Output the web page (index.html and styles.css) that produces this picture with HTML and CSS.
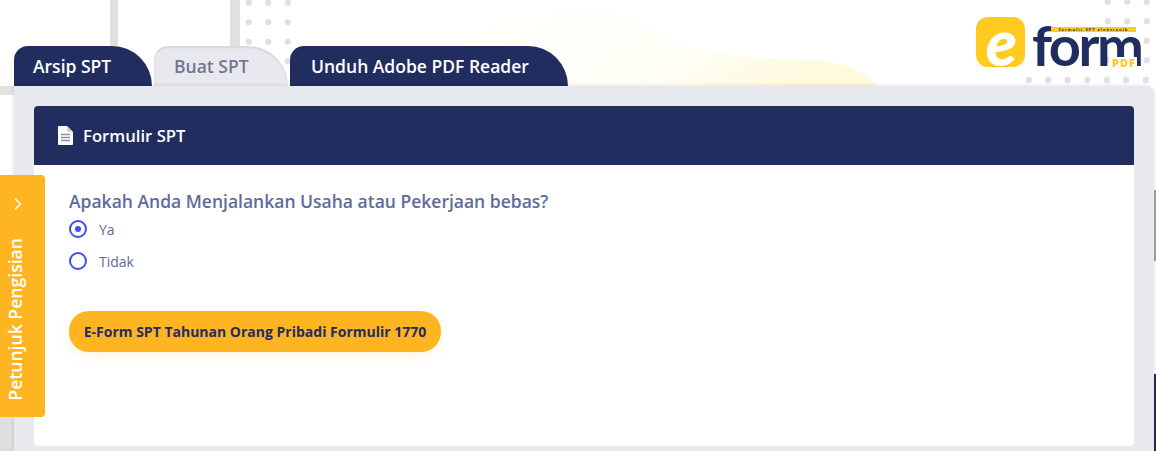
FILE: index.html
```html
<!DOCTYPE html>
<html lang="en">
<head>
  <meta charset="UTF-8">
  <meta name="viewport" content="width=device-width, initial-scale=1.0">
  <title>E-Form SPT</title>
  <link rel="stylesheet" href="styles.css">
</head>
<body>
  <!-- background decoration -->
  <div class="deco deco-bar-1"></div>
  <div class="deco deco-bar-2"></div>
  <div class="deco deco-bar-3"></div>
  <div class="deco deco-bar-4"></div>
  <div class="deco dots dots-left"></div>
  <div class="deco dots dots-right"></div>
  <div class="deco dots dots-row"></div>
  <svg class="deco deco-blob" width="480" height="86" viewBox="0 0 480 86">
    <defs>
      <linearGradient id="blob-fill" x1="0" y1="0" x2="1" y2="0.3">
        <stop offset="0" stop-color="#fffffd"/>
        <stop offset="0.7" stop-color="#fffef6"/>
        <stop offset="1" stop-color="#fff9dd"/>
      </linearGradient>
    </defs>
    <path d="M40 86 C50 40 90 14 170 10 C215 8 240 22 265 36 C295 56 360 58 410 60 C445 62 465 72 478 86 Z" fill="url(#blob-fill)"/>
  </svg>
  <div class="deco side-strip-gray"></div>
  <div class="deco side-strip-navy"></div>

  <header class="top">
    <nav class="tabs">
      <a class="tab tab-arsip">Arsip SPT</a>
      <a class="tab tab-buat active">Buat SPT</a>
      <a class="tab tab-unduh">Unduh Adobe PDF Reader</a>
    </nav>
    <div class="logo">
      <div class="logo-mark"><span class="logo-e">e</span></div>
      <div class="logo-word">
        <span class="logo-form">form</span>
        <span class="logo-tag">formulir SPT elektronik</span>
        <span class="logo-pdf">PDF</span>
      </div>
    </div>
  </header>

  <main class="panel">
    <section class="card">
      <div class="card-header">
        <svg class="doc-icon" width="15" height="19" viewBox="0 0 15 19">
          <path d="M1 0 H9 L15 6 V18 a1 1 0 0 1 -1 1 H1 a1 1 0 0 1 -1 -1 V1 a1 1 0 0 1 1 -1 Z" fill="#fff"/>
          <path d="M9.5 0.5 L14.5 5.5 H9.5 Z" fill="#d8c9a8"/>
          <path d="M3 8.5 H12 M3 11.5 H12 M3 14.5 H12" stroke="#8d90ad" stroke-width="1.4"/>
        </svg>
        <h1>Formulir SPT</h1>
      </div>
      <div class="card-body">
        <p class="question">Apakah Anda Menjalankan Usaha atau Pekerjaan bebas?</p>
        <label class="radio-row"><span class="radio checked"></span>Ya</label>
        <label class="radio-row"><span class="radio"></span>Tidak</label>
        <button class="btn-form">E-Form SPT Tahunan Orang Pribadi Formulir 1770</button>
      </div>
    </section>
  </main>

  <aside class="guide">
    <svg class="guide-arrow" width="10" height="14" viewBox="0 0 10 14">
      <path d="M2 1.5 L7.5 7 L2 12.5" fill="none" stroke="#fff" stroke-width="1.6"/>
    </svg>
    <span class="guide-text">Petunjuk Pengisian</span>
  </aside>
</body>
</html>
```

FILE: styles.css
```css
html, body {
  height: 100%;
}
body {
  margin: 0;
  height: 451px;
  overflow: hidden;
  background: #fff;
  font-family: "Open Sans", "Noto Sans", sans-serif;
  color: #222d5f;
  position: relative;
}

/* background decoration */
.deco {
  position: absolute;
}
.deco-bar-1 {
  left: 110px;
  top: 0;
  width: 8px;
  height: 46px;
  background: #e0e0e0;
}
.deco-bar-2 {
  left: 230px;
  top: 0;
  width: 10px;
  height: 46px;
  background: #e0e0e0;
}
.deco-bar-3 {
  left: 0;
  top: 86px;
  width: 14px;
  height: 9px;
  background: #e2e2e2;
}
.deco-bar-4 {
  left: 0;
  top: 175px;
  width: 14px;
  height: 276px;
  background: #dedede;
}
.dots {
  background-image: radial-gradient(circle, #e0e0e0 3px, transparent 3.5px);
  background-size: 19.5px 19.5px;
}
.dots-left {
  left: 239px;
  top: -7px;
  width: 59px;
  height: 78px;
}
.dots-right {
  left: 1098px;
  top: -8px;
  width: 58px;
  height: 78px;
}
.dots-row {
  left: 1019px;
  top: 70px;
  width: 137px;
  height: 19.5px;
}
.deco-blob {
  left: 400px;
  top: 0;
}
.side-strip-gray {
  left: 1154px;
  top: 190px;
  width: 2px;
  height: 71px;
  background: #a3a3ad;
}
.side-strip-navy {
  left: 1154px;
  top: 374px;
  width: 2px;
  height: 77px;
  background: #222d5f;
}

/* top */
.top {
  position: relative;
  height: 86px;
  padding-left: 14px;
  display: flex;
  justify-content: space-between;
  align-items: flex-end;
}
.tabs {
  display: flex;
  gap: 2px;
}
.tab {
  height: 40px;
  box-sizing: border-box;
  padding: 0 19px;
  display: flex;
  align-items: center;
  font-size: 17.5px;
  font-weight: 600;
  color: #fff;
  background: #222d5f;
  border-radius: 14px 40px 0 0;
}
.tab-arsip {
  width: 138px;
}
.tab-buat {
  width: 134px;
  padding-left: 20px;
}
.tab-unduh {
  width: 278px;
  padding-left: 21px;
}
.tab.active {
  background: #e8e9ef;
  color: #73778f;
  box-shadow: inset 0 2px 2px rgba(0, 0, 0, 0.08);
}

/* logo */
.logo {
  align-self: flex-start;
  margin: 17px 20px 0 0;
  display: flex;
  gap: 10px;
}
.logo-mark {
  width: 49px;
  height: 50px;
  background: #ffcb1f;
  border-radius: 12px;
  display: flex;
  justify-content: center;
}
.logo-e {
  font-family: "Lato", sans-serif;
  font-size: 64px;
  font-weight: 900;
  font-style: italic;
  line-height: 50px;
  color: #fff;
  margin-left: 2px;
}
.logo-word {
  position: relative;
  width: 101px;
  height: 50px;
}
.logo-form {
  position: absolute;
  left: -3px;
  top: -3px;
  font-family: "Lato", sans-serif;
  font-size: 56px;
  font-weight: 700;
  line-height: 62px;
  letter-spacing: -2.5px;
  color: #222d5f;
}
.logo-tag {
  position: absolute;
  left: 16px;
  top: 10px;
  width: 85px;
  height: 5px;
  background: #ffcb1f;
  font-size: 4px;
  font-weight: 700;
  line-height: 5px;
  letter-spacing: 1px;
  text-align: center;
  white-space: nowrap;
  overflow: hidden;
}
.logo-pdf {
  position: absolute;
  right: -1px;
  top: 40px;
  padding: 0 1px 0 3px;
  background: #fff;
  font-size: 11px;
  font-weight: 800;
  line-height: 11px;
  letter-spacing: 1px;
  color: #ffcb1f;
}

/* panel */
.panel {
  position: relative;
  margin: 0 2px 0 14px;
  height: 365px;
  box-sizing: border-box;
  padding: 20px 20px 5px;
  background: #e8e9ef;
  border-radius: 0 8px 0 0;
  box-shadow: 0 0 4px rgba(0, 0, 0, 0.14);
}
.card {
  height: 340px;
  display: flex;
  flex-direction: column;
  background: #fff;
  border-radius: 4px;
  overflow: hidden;
}
.card-header {
  height: 59px;
  flex: none;
  box-sizing: border-box;
  padding-left: 24px;
  display: flex;
  align-items: center;
  gap: 10px;
  background: #222d5f;
}
.card-header h1 {
  margin: 0;
  font-size: 16.7px;
  font-weight: 600;
  color: #fff;
}
.card-body {
  padding: 24px 35px;
}
.question {
  margin: 0;
  font-size: 17.5px;
  font-weight: 600;
  line-height: 24px;
  color: #5f6b99;
}
.radio-row {
  display: flex;
  align-items: center;
  gap: 12px;
  height: 32px;
  font-size: 14px;
  color: #5f6b99;
}
.radio {
  width: 18px;
  height: 18px;
  box-sizing: border-box;
  border: 2px solid #3d4ef5;
  border-radius: 50%;
  display: flex;
  align-items: center;
  justify-content: center;
}
.radio.checked::after {
  content: "";
  width: 6px;
  height: 6px;
  border-radius: 50%;
  background: #3d4ef5;
}
.btn-form {
  display: block;
  margin-top: 34px;
  width: 372px;
  height: 41px;
  border: none;
  border-radius: 20px;
  padding: 0;
  background: #ffb521;
  color: #222d5f;
  font-family: inherit;
  font-size: 14px;
  font-weight: 700;
  box-shadow: 0 4px 12px rgba(255, 181, 33, 0.15);
  cursor: pointer;
}

/* side tab */
.guide {
  position: absolute;
  left: 0;
  top: 175px;
  width: 45px;
  height: 242px;
  box-sizing: border-box;
  padding-top: 22px;
  display: flex;
  flex-direction: column;
  align-items: center;
  gap: 27px;
  background: #ffb521;
  border-radius: 0 4px 4px 0;
}
.guide-arrow {
  margin-left: -10px;
}
.guide-text {
  writing-mode: vertical-rl;
  transform: rotate(180deg);
  margin-left: -15px;
  font-size: 17.6px;
  font-weight: 600;
  line-height: 22px;
  color: #fff;
  white-space: nowrap;
}
```
